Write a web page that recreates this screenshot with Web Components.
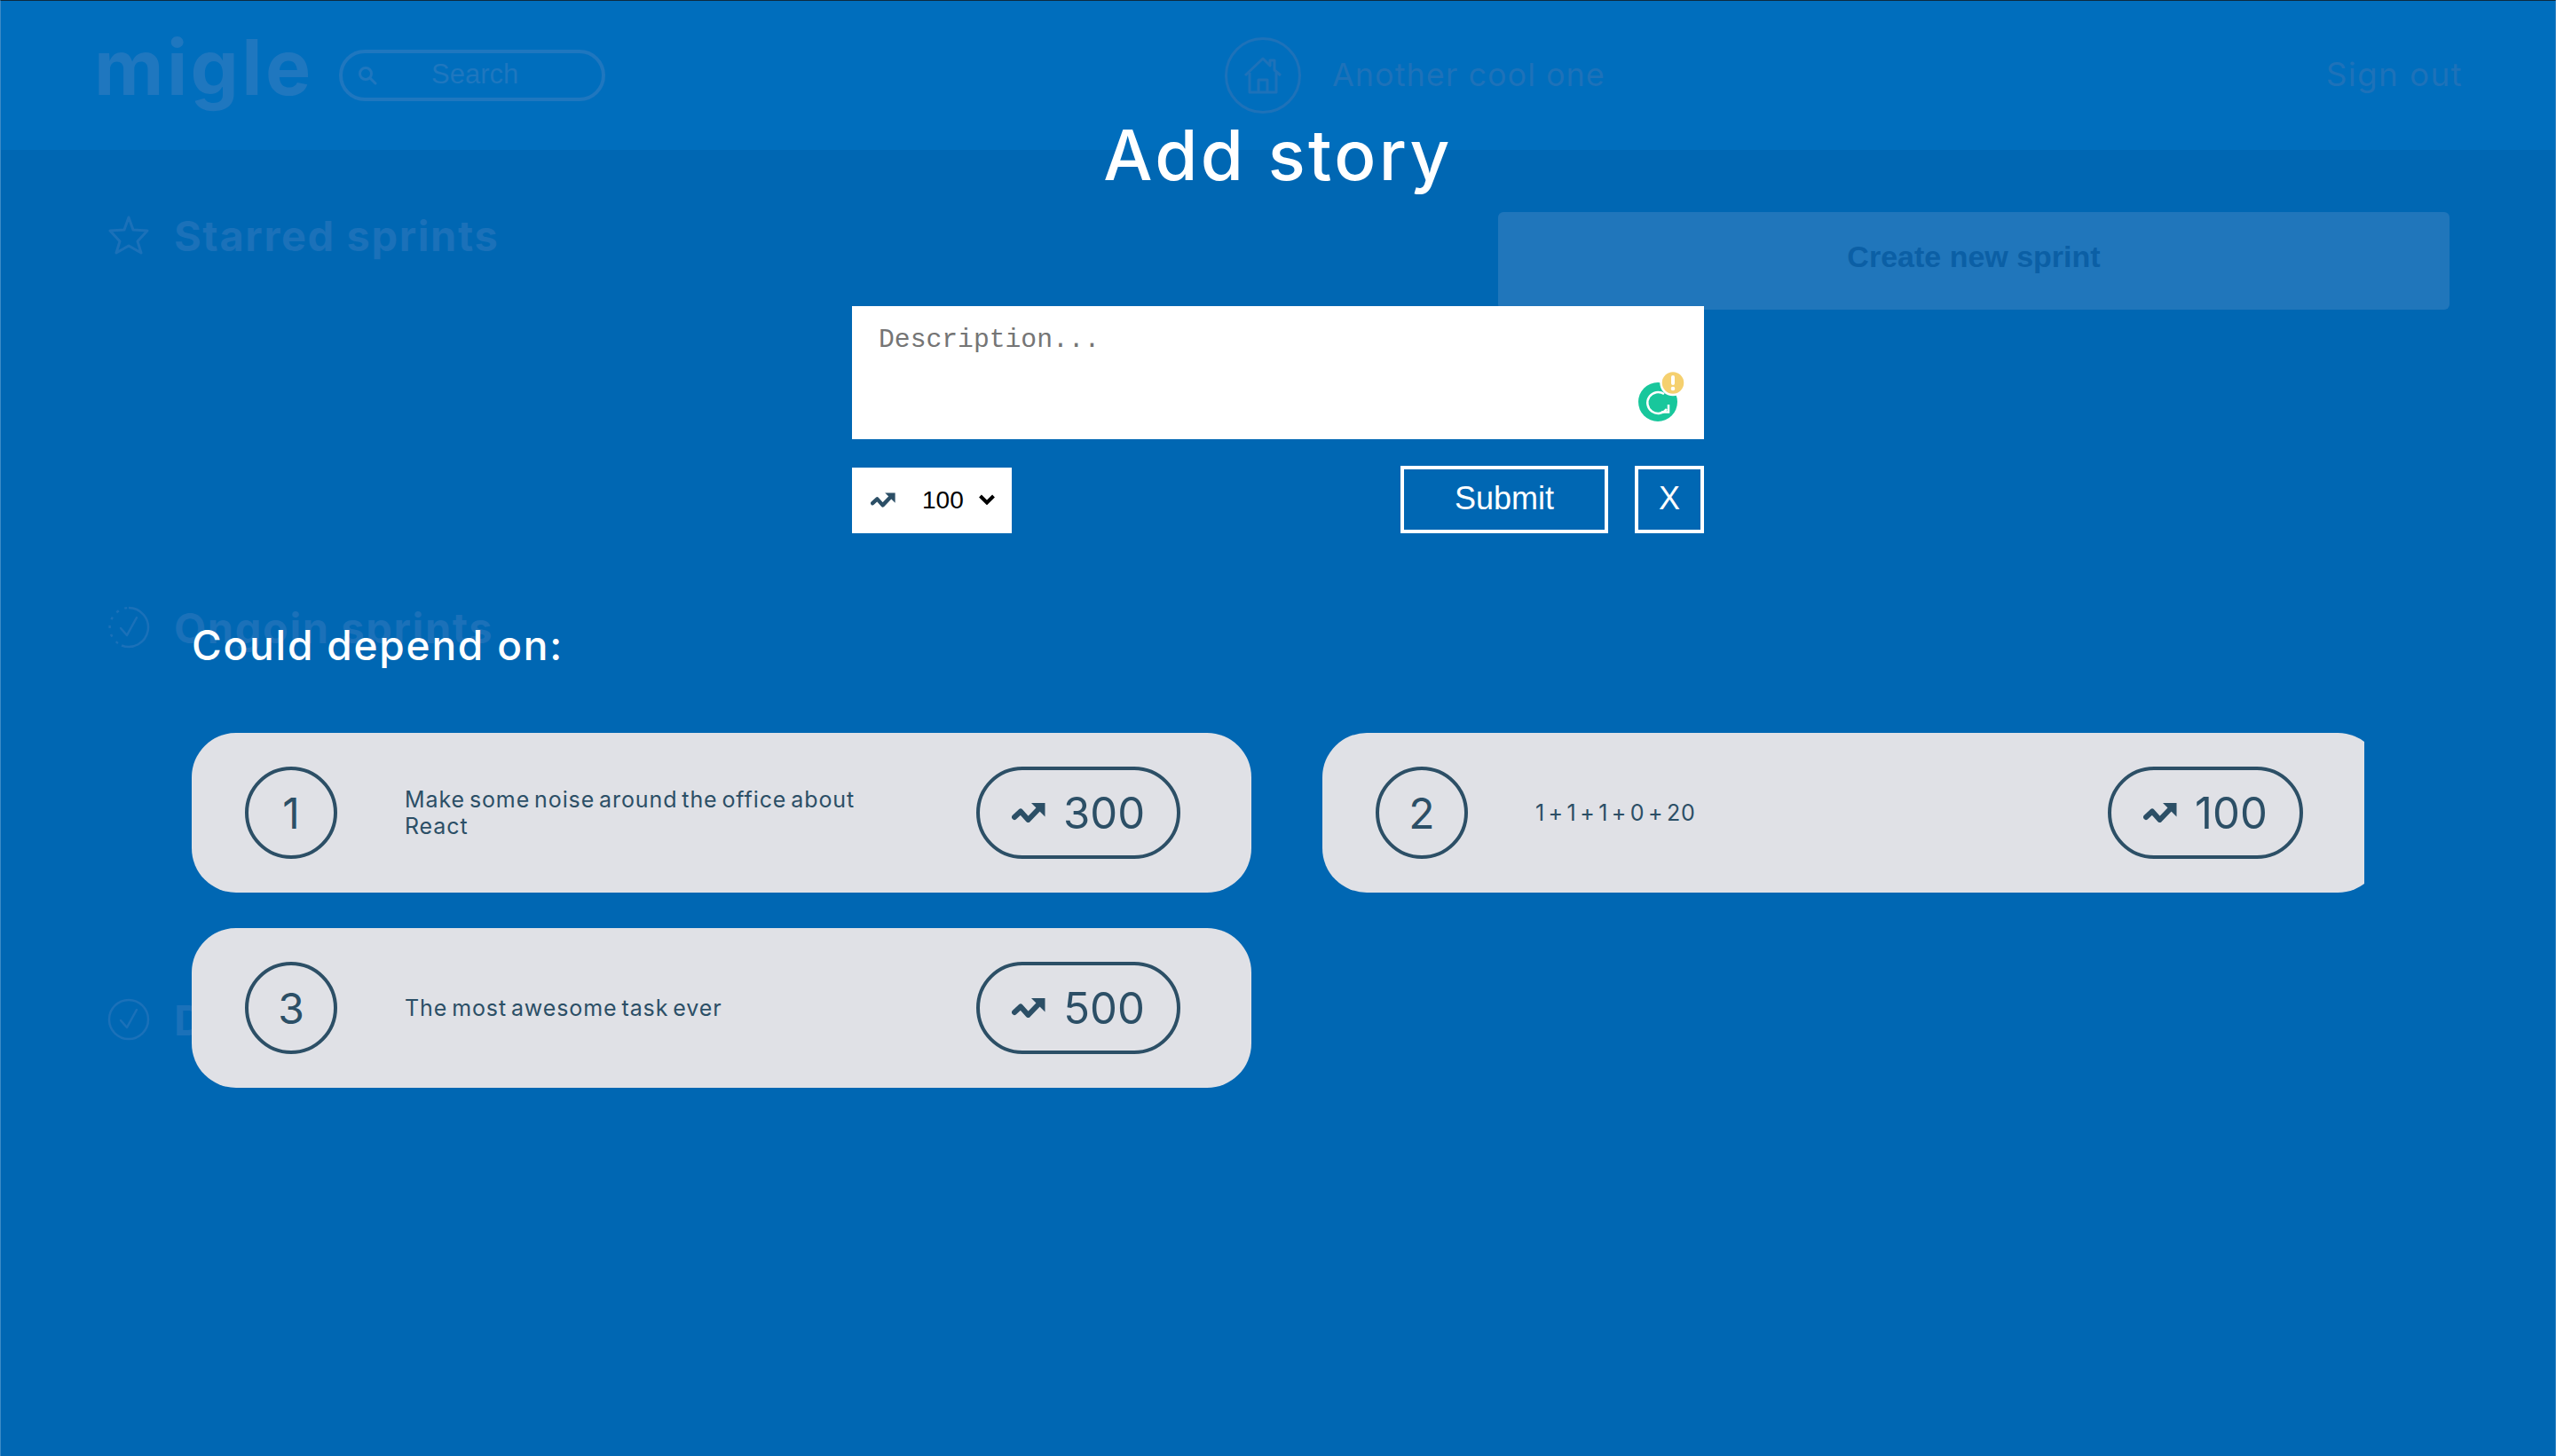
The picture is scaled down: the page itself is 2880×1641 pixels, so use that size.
<!DOCTYPE html>
<html>
<head>
<meta charset="utf-8">
<title>migle</title>
<style>
  html, body { margin: 0; height: 100%; }
  body { background: #0067b3; font-family: Inter, "Noto Sans", sans-serif; overflow: hidden; }
  story-card[tight] { --pill-shift: -2px; --word: -4.4px; }
</style>
</head>
<body>
<migle-page>
  <migle-header></migle-header>
  <migle-board></migle-board>
  <add-story>
    <story-card num="1" points="300">Make some noise around the office about React</story-card>
    <story-card num="2" points="100" tight>1 + 1 + 1 + 0 + 20</story-card>
    <story-card num="3" points="500">The most awesome task ever</story-card>
  </add-story>
</migle-page>

<script>
const trendIcon = `<svg viewBox="0 0 38 22" width="38" height="22" fill="currentColor"><polyline points="3,16 10,9.5 18.5,19 31,6" fill="none" stroke="currentColor" stroke-width="6" stroke-linejoin="round" stroke-linecap="round"/><polygon points="22,0 37.5,0 37.5,15.5"/></svg>`;

class MiglePage extends HTMLElement {
  constructor() {
    super();
    this.attachShadow({ mode: 'open' });
    this.shadowRoot.innerHTML = `
      <style>
        :host { display: block; position: relative; height: 1641px; box-sizing: border-box; overflow: hidden;
          background: #0067b3; border-top: 1px solid #0d2a40; border-left: 1px solid #3c8ac6; border-right: 1px solid #3c8ac6; }
      </style>
      <slot></slot>`;
  }
}

class MigleHeader extends HTMLElement {
  constructor() {
    super();
    this.attachShadow({ mode: 'open' });
    this.shadowRoot.innerHTML = `
      <style>
        :host { display: flex; align-items: center; height: 168px; background: #006ebd; color: #1f77bf; padding-left: 105px; padding-right: 104px; }
        .logo { font-size: 86px; font-weight: 700; letter-spacing: 3.4px; line-height: 1; width: 276px; padding-bottom: 18px; }
        .search { box-sizing: border-box; width: 300px; height: 58px; border: 4px solid #1f77bf; border-radius: 29px;
          display: flex; align-items: center; padding-left: 17px; }
        .search span { font: 31px "Liberation Sans", Arial, sans-serif; margin-left: 61px; padding-bottom: 3px; }
        .home { display: flex; align-items: center; margin-left: 698px; }
        .ring { box-sizing: border-box; width: 86px; height: 86px; border: 3px solid #1e72b9; border-radius: 50%; display: flex; align-items: center; justify-content: center; color: #1e72b9; }
        .cool { font-size: 36px; letter-spacing: 1px; color: #1e72b9; margin-left: 35px; padding-bottom: 3px; }
        .out { font-size: 37px; letter-spacing: 1.3px; color: #1e72b9; margin-left: auto; padding-bottom: 3px; }
      </style>
      <div class="logo">migle</div>
      <div class="search">
        <svg width="22" height="22" viewBox="0 0 22 22" fill="none" stroke="currentColor" stroke-width="3"><circle cx="9" cy="9" r="6.5"/><line x1="14" y1="14" x2="20" y2="20" stroke-linecap="round"/></svg>
        <span>Search</span>
      </div>
      <div class="home">
        <div class="ring">
          <svg width="46" height="46" viewBox="0 0 46 46" fill="none" stroke="currentColor" stroke-width="3" stroke-linejoin="round"><path d="M3 23 L23 4 L31 12 V6 H36 V17 L43 23"/><path d="M8 20 V42 H38 V20"/><path d="M18 42 V28 H28 V42"/></svg>
        </div>
        <div class="cool">Another cool one</div>
      </div>
      <div class="out">Sign out</div>`;
  }
}

class SprintHeading extends HTMLElement {
  constructor() {
    super();
    this.attachShadow({ mode: 'open' });
    const icons = {
      star: '<svg width="46" height="44" viewBox="0 0 46 44" fill="none" stroke="currentColor" stroke-width="3" stroke-linejoin="round"><path d="M23 2 L28 16 L44 17 L33 29 L37 42 L23 34 L9 42 L13 29 L2 17 L18 16 Z"/></svg>',
      dashed: '<svg width="48" height="48" viewBox="0 0 48 48" fill="none" stroke="currentColor" stroke-width="2.5"><path d="M24 2 A22 22 0 1 1 16 44.5" /><path d="M12 42 A22 22 0 0 1 24 2" stroke-dasharray="3 7"/><path d="M15 25 L22 33 L33 13" stroke-linecap="round" stroke-linejoin="round"/></svg>',
      check: '<svg width="48" height="48" viewBox="0 0 48 48" fill="none" stroke="currentColor" stroke-width="2.5"><circle cx="24" cy="24" r="22"/><path d="M15 25 L22 33 L33 13" stroke-linecap="round" stroke-linejoin="round"/></svg>'
    };
    this.shadowRoot.innerHTML = `
      <style>
        :host { display: flex; align-items: center; color: #1b71b9; height: 48px; }
        .icon { width: 48px; height: 48px; display: flex; align-items: center; justify-content: center; margin-right: 27px; }
        .label { font-size: 47px; font-weight: 700; letter-spacing: 1.6px; line-height: 1; }
      </style>
      <span class="icon">${icons[this.getAttribute('icon')]}</span>
      <span class="label"><slot></slot></span>`;
  }
}

class MigleBoard extends HTMLElement {
  constructor() {
    super();
    this.attachShadow({ mode: 'open' });
    this.shadowRoot.innerHTML = `
      <style>
        :host { display: flex; justify-content: space-between; padding: 70px 119px 0 120px; }
        .col { display: flex; flex-direction: column; gap: 394px; padding-top: 2px; }
        .create { box-sizing: border-box; width: 1072px; height: 110px; padding-bottom: 10px; background: #2076bb; border-radius: 6px; color: #0b5fa5;
          display: flex; align-items: center; justify-content: center; font: bold 34px "Liberation Sans", Arial, sans-serif; }
      </style>
      <div class="col">
        <sprint-heading icon="star">Starred sprints</sprint-heading>
        <sprint-heading icon="dashed">Ongoin sprints</sprint-heading>
        <sprint-heading icon="check">Done sprints</sprint-heading>
      </div>
      <div class="create">Create new sprint</div>`;
  }
}

class StoryForm extends HTMLElement {
  constructor() {
    super();
    this.attachShadow({ mode: 'open' });
    this.shadowRoot.innerHTML = `
      <style>
        :host { display: block; width: 960px; margin: 0 auto; }
        .box { position: relative; height: 150px; background: #fff; }
        textarea { display: block; box-sizing: border-box; width: 100%; height: 100%; border: 0; outline: 0; resize: none; padding: 21px 30px;
          font: 29.7px/1.15 "Liberation Mono", "Courier New", monospace; background: transparent; }
        textarea::placeholder { color: #757575; opacity: 1; }
        .gram { position: absolute; left: 880px; top: 70px; }
        .row { display: flex; align-items: flex-end; margin-top: 30px; }
        .pick { display: flex; align-items: center; width: 180px; height: 74px; background: #fff; color: #2c4f66; padding: 0 0 2px 21px; box-sizing: border-box; }
        .pick svg.trend { width: 28px; height: 17px; }
        select { appearance: none; border: 0; outline: 0; background: transparent; color: #000; font: 28px "Liberation Sans", Arial, sans-serif; padding: 0; margin-left: 30px; width: 48px; }
        .chev { margin-left: 16px; }
        button { box-sizing: border-box; height: 76px; background: transparent; border: 4px solid #fff; color: #fff; font: 36px "Liberation Sans", Arial, sans-serif; padding: 0 0 2px; }
        .submit { width: 234px; margin-left: auto; }
        .close { width: 78px; margin-left: 30px; }
      </style>
      <div class="box">
        <textarea placeholder="Description..."></textarea>
        <svg class="gram" width="60" height="62" viewBox="0 0 60 62">
          <circle cx="28" cy="38" r="22" fill="#18c79c"/>
          <path d="M35 29 A12 12 0 1 0 38 46" fill="none" stroke="#fff" stroke-width="2.5"/>
          <path d="M40 41 V49.5 H32" fill="none" stroke="#fff" stroke-width="2.5"/>
          <circle cx="45" cy="16.5" r="13.5" fill="#f5d06f" stroke="#fff" stroke-width="2.5"/>
          <rect x="43" y="8" width="4" height="11" rx="2" fill="#fff"/>
          <circle cx="45" cy="23" r="2.3" fill="#fff"/>
        </svg>
      </div>
      <div class="row">
        <div class="pick">
          ${trendIcon.replace('<svg ', '<svg class="trend" ')}
          <select><option>100</option><option>300</option><option>500</option></select>
          <svg class="chev" width="18" height="12" viewBox="0 0 18 12" fill="none" stroke="#000" stroke-width="4"><path d="M1.5 2 L9 9.5 L16.5 2"/></svg>
        </div>
        <button class="submit">Submit</button>
        <button class="close">X</button>
      </div>`;
  }
}

class StoryCard extends HTMLElement {
  constructor() {
    super();
    this.attachShadow({ mode: 'open' });
    this.shadowRoot.innerHTML = `
      <style>
        :host { display: grid; grid-template-columns: 104px 1fr 260px; align-items: center; box-sizing: border-box; height: 180px;
          background: #e0e1e6; border-radius: 50px; color: #2c4f66; padding: 0 67px 0 60px; }
        .num { box-sizing: border-box; width: 104px; height: 104px; border: 4px solid currentColor; border-radius: 50%; display: flex; align-items: center; justify-content: center; font-size: 48px; }
        .text { font-size: 25px; line-height: 30px; letter-spacing: .9px; word-spacing: var(--word, -3px); padding-left: 76px; padding-right: 96px; }
        .pill { justify-self: center; box-sizing: border-box; height: 104px; border: 4px solid currentColor; border-radius: 52px; display: flex; align-items: center; gap: 20px; padding: 0 36px; font-size: 49px;
          transform: translateX(var(--pill-shift, 2px)); }
      </style>
      <div class="num">${this.getAttribute('num')}</div>
      <div class="text"><slot></slot></div>
      <div class="pill">${trendIcon}<span>${this.getAttribute('points')}</span></div>`;
  }
}

class AddStory extends HTMLElement {
  constructor() {
    super();
    this.attachShadow({ mode: 'open' });
    this.shadowRoot.innerHTML = `
      <style>
        :host { display: block; position: absolute; inset: 0; color: #fff; padding-top: 124px; }
        h1 { margin: 0 0 120px; font-size: 78px; font-weight: 500; letter-spacing: 3.4px; line-height: 100px; text-align: center; }
        h2 { margin: 98px 0 0 215px; font-size: 46px; font-weight: 500; letter-spacing: 1.8px; line-height: 56px; }
        .list { display: grid; grid-template-columns: 1194px 1194px; gap: 40px 80px; width: 2448px; margin: 71px 0 0 215px; overflow: hidden; }
      </style>
      <h1>Add story</h1>
      <story-form></story-form>
      <h2>Could depend on:</h2>
      <div class="list"><slot></slot></div>`;
  }
}

customElements.define('migle-page', MiglePage);
customElements.define('migle-header', MigleHeader);
customElements.define('sprint-heading', SprintHeading);
customElements.define('migle-board', MigleBoard);
customElements.define('story-form', StoryForm);
customElements.define('story-card', StoryCard);
customElements.define('add-story', AddStory);
</script>
</body>
</html>
